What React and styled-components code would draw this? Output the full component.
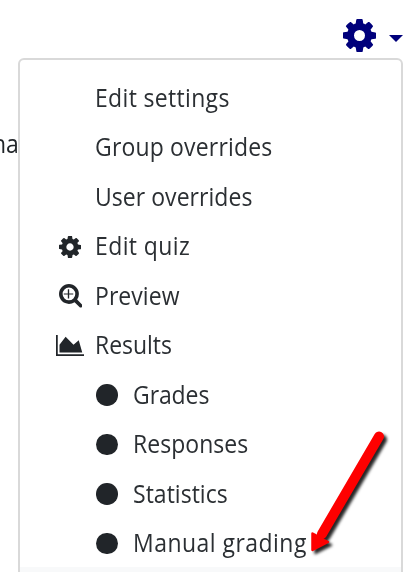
import React from "react";
import styled, { createGlobalStyle } from "styled-components";

const GlobalStyle = createGlobalStyle`
  html, body { margin: 0; background: #fff; }
  body { overflow: hidden; }
  * { box-sizing: border-box; }
`;

const Page = styled.main`
  position: relative;
  display: flex;
  flex-direction: column;
  width: 409px;
  height: 572px;
  overflow: hidden;
  background: #fff;
  color: #212529;
  font-family: "Open Sans", "Noto Sans", sans-serif;
  font-size: 24.6px;
`;

const Toolbar = styled.header`
  display: flex;
  flex: none;
  justify-content: flex-end;
  height: 58px;
  padding: 19px 6px 0 0;
`;

const MenuButton = styled.button`
  display: flex;
  align-items: flex-start;
  gap: 12.6px;
  height: 33px;
  padding: 0;
  border: 0;
  background: none;
  color: #00007b;
`;

const Caret = styled.span`
  margin-top: 16px;
  border-top: 7px solid currentColor;
  border-left: 7px solid transparent;
  border-right: 7px solid transparent;
`;

const Underlay = styled.span`
  position: absolute;
  left: -8px;
  top: 127px;
  line-height: 34px;
  transform: scaleX(0.935);
  transform-origin: 0 50%;
  white-space: nowrap;
`;

const Menu = styled.nav`
  position: relative;
  flex: none;
  width: 385px;
  height: 540px;
  margin-left: 18px;
  padding-top: 11.2px;
  border: 2px solid #d9d9d9;
  border-radius: 6px;
  background: #fff;
`;

const Item = styled.div`
  display: flex;
  align-items: center;
  height: 49.54px;
  padding-left: ${(p) => (p.$nested ? "74px" : "36.4px")};
  background: ${(p) => (p.$active ? "#f8f9fa" : "transparent")};
`;

const IconSlot = styled.span`
  display: flex;
  flex: none;
  align-items: center;
  justify-content: center;
  width: 28px;
  height: 28px;
  margin-right: ${(p) => (p.$nested ? "11px" : "10.4px")};
  margin-top: 4px;
`;

const Label = styled.span`
  position: relative;
  top: 1.6px;
  line-height: 34px;
  letter-spacing: ${(p) => p.$spacing || 0}px;
  transform: scaleX(0.935);
  transform-origin: 0 50%;
  color: #2b2f33;
  white-space: nowrap;
`;

const Dot = styled.span`
  width: 21.5px;
  height: 21.5px;
  margin-right: 2px;
  border-radius: 50%;
  background: #212529;
`;

const Glyph = styled.svg`
  display: block;
  flex: none;
  fill: currentColor;
`;

const ArrowMark = styled.svg`
  position: absolute;
  left: 300px;
  top: 424px;
  filter: drop-shadow(3px 3px 1.5px rgba(0, 0, 0, 0.85));
`;

const Gear = ({ size }) => (
  <Glyph width={size} height={size} viewBox="128 128 1536 1536">
    <path d="M1152 896q0-106-75-181t-181-75-181 75-75 181 75 181 181 75 181-75 75-181zm512-109v222q0 12-8 23t-20 13l-185 28q-19 54-39 91 35 50 107 138 10 12 10 25t-9 23q-27 37-99 108t-94 71q-12 0-26-9l-138-108q-44 23-91 38-16 136-29 186-7 28-36 28h-222q-14 0-24.5-8.5t-11.5-21.5l-28-184q-49-16-90-37l-141 107q-10 9-25 9-14 0-25-11-126-114-165-168-7-10-7-23 0-12 8-23 15-21 51-66.5t54-70.5q-27-50-41-99l-183-27q-13-2-21-12.5t-8-23.5v-222q0-12 8-23t19-13l186-28q14-46 39-92-40-57-107-138-10-12-10-24 0-10 9-23 26-36 98.500-107.500t94.500-71.500q13 0 26 10l138 107q44-23 91-38 16-136 29-186 7-28 36-28h222q14 0 24.500 8.500t11.500 21.500l28 184q49 16 90 37l142-107q9-9 24-9 13 0 25 10 129 119 165 170 7 8 7 22 0 12-8 23-15 21-51 66.500t-54 70.500q26 50 41 98l183 28q13 2 21 12.500t8 23.500z" />
  </Glyph>
);

const ZoomIn = () => (
  <Glyph width="23.500" height="23.500" viewBox="64 128 1664 1664">
    <path d="M1072 800v64q0 8-8 8h-280v280q0 8-8 8h-80q-8 0-8-8v-280h-280q-8 0-8-8v-64q0-8 8-8h280v-280q0-8 8-8h80q8 0 8 8v280h280q8 0 8 8zm144 32q0-185-131.500-316.500t-316.500-131.500-316.500 131.500-131.500 316.500 131.500 316.500 316.500 131.500 316.500-131.500 131.500-316.500zm512 832q0 53-37.500 90.500t-90.500 37.500q-54 0-90-38l-343-342q-179 124-399 124-143 0-273.500-55.500t-225-150-150-225-55.500-273.500 55.500-273.500 150-225 225-150 273.500-55.500 273.500 55.500 225 150 150 225 55.500 273.500q0 220-124 399l343 343q37 37 37 90z" />
  </Glyph>
);

const AreaChart = () => (
  <Glyph width="28" height="21" viewBox="0 128 2048 1536">
    <path d="M2048 1536v128h-2048v-1536h128v1408h1920zm-384-1024l256 896h-1664v-576l448-576 576 576z" />
  </Glyph>
);

const items = [
  { label: "Edit settings", spacing: 0.35 },
  { label: "Group overrides", spacing: 0.18 },
  { label: "User overrides", spacing: 0.05 },
  { label: "Edit quiz", spacing: 0.42, icon: <Gear size={22} /> },
  { label: "Preview", spacing: 0.05, icon: <ZoomIn /> },
  { label: "Results", spacing: -0.05, icon: <AreaChart /> },
  { label: "Grades", spacing: -0.1, icon: <Dot />, nested: true },
  { label: "Responses", spacing: 0.04, icon: <Dot />, nested: true },
  { label: "Statistics", spacing: 0.02, icon: <Dot />, nested: true },
  { label: "Manual grading", spacing: 0.5, icon: <Dot />, nested: true },
];

export default function App() {
  return (
    <Page>
      <GlobalStyle />
      <Toolbar>
        <MenuButton aria-label="Actions menu">
          <Gear size={33} />
          <Caret />
        </MenuButton>
      </Toolbar>
      <Underlay>hav</Underlay>
      <Menu>
        {items.map((item) => (
          <Item key={item.label} $nested={item.nested}>
            <IconSlot $nested={item.nested}>{item.icon}</IconSlot>
            <Label $spacing={item.spacing}>{item.label}</Label>
          </Item>
        ))}
        <Item $active />
      </Menu>
      <ArrowMark width="100" height="140" viewBox="300 424 100 140">
        <path d="M379 436.500L322 534" stroke="#fe0000" strokeWidth="10" strokeLinecap="round" />
        <path d="M312.500 533.500L319 537L324 540L328 542L312.500 550Z" fill="#fe0000" stroke="#fe0000" strokeWidth="2.500" strokeLinejoin="round" />
      </ArrowMark>
    </Page>
  );
}
